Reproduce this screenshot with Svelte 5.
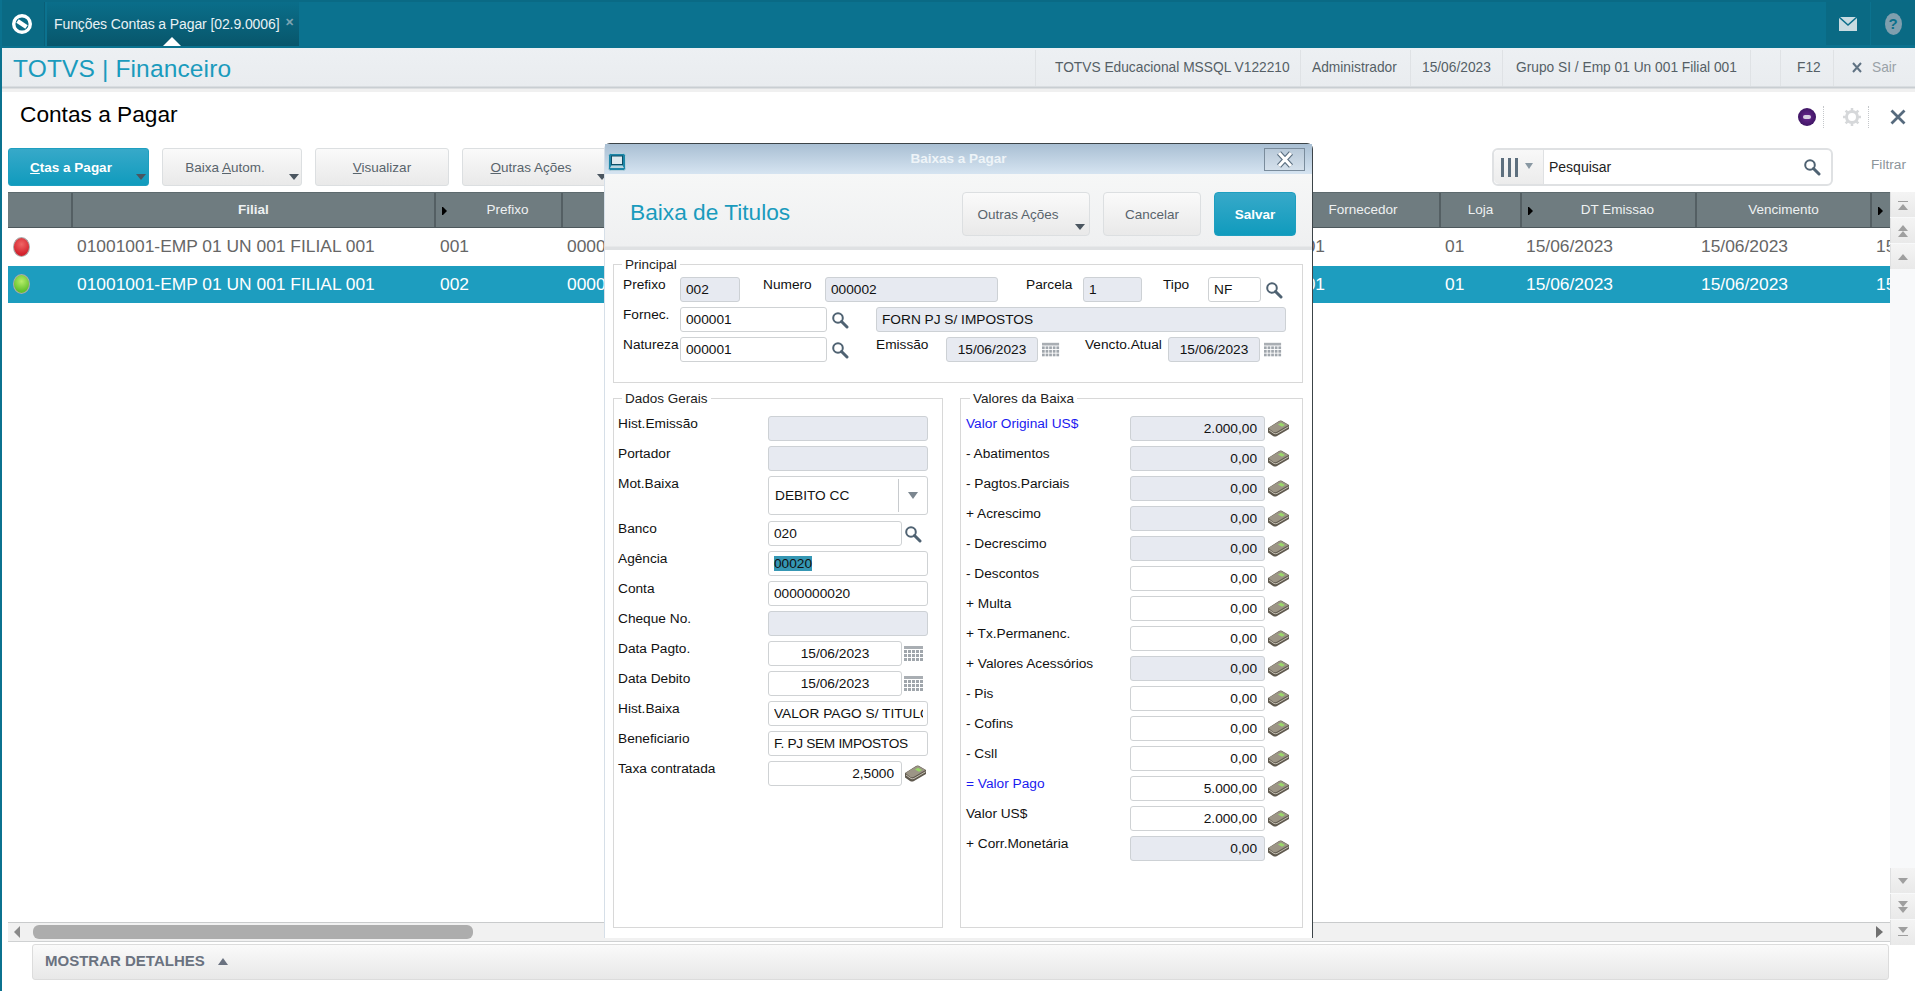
<script>
  const columns = [
    { label: '', w: 65 },
    { label: 'Filial', w: 363, bold: true },
    { label: 'Prefixo', w: 127, sort: true },
    { label: 'Numero', w: 200 },
    { label: 'Parcela', w: 100 },
    { label: 'Tipo', w: 100 },
    { label: 'Natureza', w: 324 },
    { label: 'Fornecedor', w: 154 },
    { label: 'Loja', w: 81 },
    { label: 'DT Emissao', w: 175, sort: true },
    { label: 'Vencimento', w: 175 },
    { label: '', w: 18, sort: true }
  ];
  const rows = [
    { cls: 'red', selected: false, prefix: '001', num: '000001' },
    { cls: 'green', selected: true, prefix: '002', num: '000002' }
  ];
  const geral = [
    { label: 'Hist.Emissão', ro: true },
    { label: 'Portador', ro: true },
    { label: 'Mot.Baixa', select: 'DEBITO CC' },
    { label: 'Banco', value: '020', icon: 'search' },
    { label: 'Agência', value: '00020', highlighted: true },
    { label: 'Conta', value: '0000000020' },
    { label: 'Cheque No.', ro: true },
    { label: 'Data Pagto.', value: '15/06/2023', icon: 'cal', center: true },
    { label: 'Data Debito', value: '15/06/2023', icon: 'cal', center: true },
    { label: 'Hist.Baixa', value: 'VALOR PAGO S/ TITULO', clip: true },
    { label: 'Beneficiario', value: 'F. PJ SEM IMPOSTOS', tight: true },
    { label: 'Taxa contratada', value: '2,5000', icon: 'money', right: true }
  ];
  const valores = [
    { label: 'Valor Original US$', value: '2.000,00', ro: true, blue: true },
    { label: '- Abatimentos', value: '0,00', ro: true },
    { label: '- Pagtos.Parciais', value: '0,00', ro: true },
    { label: '+ Acrescimo', value: '0,00', ro: true },
    { label: '- Decrescimo', value: '0,00', ro: true },
    { label: '- Descontos', value: '0,00' },
    { label: '+ Multa', value: '0,00' },
    { label: '+ Tx.Permanenc.', value: '0,00' },
    { label: '+ Valores Acessórios', value: '0,00', ro: true },
    { label: '- Pis', value: '0,00' },
    { label: '- Cofins', value: '0,00' },
    { label: '- Csll', value: '0,00' },
    { label: '= Valor Pago', value: '5.000,00', blue: true },
    { label: 'Valor US$', value: '2.000,00' },
    { label: '+ Corr.Monetária', value: '0,00', ro: true }
  ];
  const calCols = [0, 4, 8, 12, 16];
</script>

{#snippet searchIcon()}
  <svg class="ico-search" width="18" height="18" viewBox="0 0 18 18">
    <circle cx="7" cy="7" r="4.8" fill="#fff" stroke="#4f6272" stroke-width="2" />
    <path d="M10.5 10.5 L16 16" stroke="#4f6272" stroke-width="3" stroke-linecap="round" />
  </svg>
{/snippet}

{#snippet calIcon()}
  <svg class="ico-cal" width="20" height="16" viewBox="0 0 20 16">
    <rect x="0" y="0" width="19" height="3" fill="#a9aeb3" />
    {#each [4, 8, 12] as y}
      {#each calCols as x}
        <rect {x} {y} width="3" height="3" fill="#a0a6ac" />
      {/each}
    {/each}
  </svg>
{/snippet}

{#snippet moneyIcon()}
  <svg class="ico-money" width="23" height="17" viewBox="0 0 23 17">
    <path d="M1 8 L12 1 Q14 0 16 1.500 L22 5 L22 9 L10 16 Q8 17 6 16 L1 12.500 Z" fill="#5f594e" />
    <path d="M1.500 8 L12 1.500 Q14 .5 16 2 L21.500 5 L10 11.800 Q8 12.800 6 11.800 Z" fill="#9c9586" />
    <path d="M11 4.500 L14 2.800 L18 5 L15 6.800 Z" fill="#9ad76a" />
    <path d="M2 10 L7 13.500 Q8 14 10 13.500 L21.500 6.800" fill="none" stroke="#cfcabd" stroke-width=".9" />
  </svg>
{/snippet}

{#snippet caret()}
  <span class="caret"></span>
{/snippet}

<div class="page">
  <header class="topbar">
    <div class="logo-cell">
      <svg width="22" height="22" viewBox="0 0 22 22">
        <circle cx="11" cy="11" r="8.300" fill="none" stroke="#fff" stroke-width="3.400" />
        <path d="M6.500 8 L15.500 14" fill="none" stroke="#fff" stroke-width="4.500" />
      </svg>
    </div>
    <div class="tab">
      <span class="tab-text">Funções Contas a Pagar [02.9.0006]</span>
      <span class="tab-close">✕</span>
      <span class="tab-notch"></span>
    </div>
    <div class="top-spacer"></div>
    <div class="top-icon">
      <svg width="18" height="14" viewBox="0 0 18 14">
        <path d="M0 0 H18 V14 H0 Z" fill="#c9dbe1" />
        <path d="M0 0 L9 8 L18 0" fill="none" stroke="#0b6f8b" stroke-width="1.500" />
      </svg>
    </div>
    <div class="top-icon help">
      <span class="help-oval">?</span>
    </div>
  </header>

  <div class="appbar">
    <div class="brand">TOTVS | Financeiro</div>
    <div class="info">
      <span class="i1">TOTVS Educacional MSSQL V122210</span>
      <span class="i2">Administrador</span>
      <span class="i3">15/06/2023</span>
      <span class="i4">Grupo SI / Emp 01 Un 001 Filial 001</span>
      <span class="i5"></span>
      <span class="i6">F12</span>
      <span class="i7">
        <svg class="sair-x" width="10" height="11" viewBox="0 0 10 11">
          <path d="M1 1 L9 10 M9 1 L1 10" stroke="#5f7283" stroke-width="2" />
        </svg>Sair</span>
    </div>
  </div>

  <div class="title-row">
    <h1>Contas a Pagar</h1>
    <div class="title-tools">
      <span class="purple"><span class="purple-in"></span></span>
      <span class="dots"></span>
      <svg class="gear" width="20" height="20" viewBox="0 0 20 20">
        <circle cx="10" cy="10" r="5.500" fill="none" stroke="#d6d8da" stroke-width="3" />
        <path d="M10 1 V4 M10 16 V19 M1 10 H4 M16 10 H19 M3.600 3.600 L5.700 5.700 M14.300 14.300 L16.400 16.400 M3.600 16.400 L5.700 14.300 M14.300 5.700 L16.400 3.600" stroke="#d6d8da" stroke-width="2.500" />
      </svg>
      <span class="dots"></span>
      <svg class="big-x" width="16" height="16" viewBox="0 0 16 16">
        <path d="M1.500 1.500 L14.500 14.500 M14.500 1.500 L1.500 14.500" stroke="#566a7d" stroke-width="2.800" />
      </svg>
    </div>
  </div>

  <div class="toolbar">
    <button class="btn primary w-ctas"><span class="lbl"><u>C</u>tas a Pagar</span>{@render caret()}</button>
    <button class="btn w-baixa"><span class="lbl">Baixa <u>A</u>utom.</span>{@render caret()}</button>
    <button class="btn w-vis"><span class="lbl"><u>V</u>isualizar</span></button>
    <button class="btn w-outras"><span class="lbl"><u>O</u>utras Ações</span>{@render caret()}</button>
    <div class="tool-spacer"></div>
    <div class="searchbox">
      <div class="search-seg">
        <span class="bars"><i></i><i></i><i></i></span>
        <span class="seg-caret"></span>
      </div>
      <div class="search-text">Pesquisar</div>
      <div class="search-btn">{@render searchIcon()}</div>
    </div>
    <div class="filtrar">Filtrar</div>
  </div>

  <div class="main">
    <div class="grid">
      <div class="grid-head">
        {#each columns as c}
          <div class="th" class:bold={c.bold} class:sorted={c.sort} style="width:{c.w}px">
            {#if c.sort}<span class="sort"></span>{/if}
            {c.label}
          </div>
        {/each}
      </div>
      {#each rows as r}
        <div class="tr" class:sel={r.selected}>
          <div class="td" style="width:65px"><span class="led {r.cls}"></span></div>
          <div class="td" style="width:363px">01001001-EMP 01 UN 001 FILIAL 001</div>
          <div class="td" style="width:127px">{r.prefix}</div>
          <div class="td" style="width:700px">{r.num}</div>
          <div class="td" style="width:178px">000001</div>
          <div class="td" style="width:81px">01</div>
          <div class="td" style="width:175px">15/06/2023</div>
          <div class="td" style="width:175px">15/06/2023</div>
          <div class="td" style="width:18px">15/06/2023</div>
        </div>
      {/each}
      <div class="grid-fill"></div>
      <div class="hscroll">
        <span class="tri-left"></span>
        <span class="thumb"></span>
        <span class="h-spacer"></span>
        <span class="tri-right"></span>
      </div>
    </div>
    <div class="vscroll">
      <div class="sb top"><span class="bar"></span><span class="up"></span></div>
      <div class="sb top"><span class="up"></span><span class="up"></span></div>
      <div class="sb top"><span class="up"></span></div>
      <div class="sb-fill"></div>
      <div class="sb bot"><span class="down"></span></div>
      <div class="sb bot"><span class="down"></span><span class="down"></span></div>
      <div class="sb bot"><span class="down"></span><span class="bar"></span></div>
    </div>
  </div>

  <div class="details">MOSTRAR DETALHES <span class="det-tri"></span></div>

  <section class="modal">
    <div class="m-title">
      <svg class="m-icon" width="18" height="18" viewBox="0 0 18 18">
        <rect x=".5" y=".5" width="17" height="17" rx="2" fill="#1d86a8" stroke="#b6d0dc" />
        <rect x="3.500" y="3" width="11" height="8.500" fill="#dfe9ee" stroke="#0e4f66" />
        <path d="M3.500 12.500 H14.500 L16 15 H2 Z" fill="#bcd6e0" />
      </svg>
      <span class="m-caption">Baixas a Pagar</span>
      <button class="m-close" aria-label="Fechar">
        <svg width="22" height="19" viewBox="0 0 22 19">
          <path d="M5 3 L17 16 M17 3 L5 16" stroke="#5b6f80" stroke-width="5.500" />
          <path d="M5 3 L17 16 M17 3 L5 16" stroke="#fff" stroke-width="3.200" />
        </svg>
      </button>
    </div>
    <div class="m-head">
      <h2>Baixa de Titulos</h2>
      <div class="m-actions">
        <button class="btn mb-outras"><span class="lbl">Outras Ações</span>{@render caret()}</button>
        <button class="btn mb-cancel"><span class="lbl">Cancelar</span></button>
        <button class="btn primary mb-save"><span class="lbl">Salvar</span></button>
      </div>
    </div>
    <div class="m-body">
      <fieldset class="fs principal">
        <legend>Principal</legend>
        <div class="p-row">
          <label class="lab w57">Prefixo</label>
          <span class="inp ro w60">002</span>
          <label class="lab l23 w62">Numero</label>
          <span class="inp ro w173">000002</span>
          <label class="lab l28 w57">Parcela</label>
          <span class="inp ro w59">1</span>
          <label class="lab l21 w45">Tipo</label>
          <span class="inp w53">NF</span>
          <span class="ic-cell">{@render searchIcon()}</span>
        </div>
        <div class="p-row">
          <label class="lab w57">Fornec.</label>
          <span class="inp w147">000001</span>
          <span class="ic-cell">{@render searchIcon()}</span>
          <span class="inp ro w410 l27">FORN PJ S/ IMPOSTOS</span>
        </div>
        <div class="p-row">
          <label class="lab w57">Natureza</label>
          <span class="inp w147">000001</span>
          <span class="ic-cell">{@render searchIcon()}</span>
          <label class="lab l27 w70">Emissão</label>
          <span class="inp ro center w92">15/06/2023</span>
          <span class="ic-cell">{@render calIcon()}</span>
          <label class="lab l25 w83">Vencto.Atual</label>
          <span class="inp ro center w92">15/06/2023</span>
          <span class="ic-cell">{@render calIcon()}</span>
        </div>
      </fieldset>
      <div class="two">
        <fieldset class="fs geral">
          <legend>Dados Gerais</legend>
          {#each geral as f}
            <div class="f-row" class:tall={f.select}>
              <label class="lab f-lab">{f.label}</label>
              {#if f.select}
                <div class="select">
                  <span class="sel-val">{f.select}</span>
                  <span class="sel-btn"><span class="sel-tri"></span></span>
                </div>
              {:else}
                <span class="inp" class:ro={f.ro} class:center={f.center} class:right={f.right} class:short={f.icon} class:clip={f.clip} class:tight={f.tight}>
                  {#if f.highlighted}<mark>{f.value}</mark>{:else}{f.value ?? ''}{/if}
                </span>
                {#if f.icon === 'search'}<span class="ic-cell">{@render searchIcon()}</span>{/if}
                {#if f.icon === 'cal'}<span class="ic-cell">{@render calIcon()}</span>{/if}
                {#if f.icon === 'money'}<span class="ic-cell">{@render moneyIcon()}</span>{/if}
              {/if}
            </div>
          {/each}
        </fieldset>
        <fieldset class="fs valores">
          <legend>Valores da Baixa</legend>
          {#each valores as v}
            <div class="v-row">
              <label class="lab v-lab" class:blue={v.blue}>{v.label}</label>
              <span class="inp right v-inp" class:ro={v.ro}>{v.value}</span>
              <span class="ic-cell">{@render moneyIcon()}</span>
            </div>
          {/each}
        </fieldset>
      </div>
    </div>
  </section>
</div>

<style>
  :global(body) { margin: 0; background: #fff; }
  .page {
    position: relative;
    width: 1915px;
    height: 991px;
    overflow: hidden;
    display: flex;
    flex-direction: column;
    font-family: "Liberation Sans", Arial, sans-serif;
    font-size: 13px;
    color: #000;
    background: #fff;
    box-sizing: border-box;
    border-left: 2px solid #0b728f;
  }
  .page * { box-sizing: border-box; }

  .topbar {
    height: 48px;
    margin-left: -2px;
    background: #0b728f;
    border-top: 2px solid #0a6a85;
    display: flex;
    flex: none;
  }
  .logo-cell {
    width: 45px;
    height: 44px;
    background: #0a6a84;
    border-right: 1px solid #0a5f77;
    display: flex;
    align-items: center;
    justify-content: center;
  }
  .tab {
    position: relative;
    width: 252px;
    height: 44px;
    margin-left: 2px;
    background: linear-gradient(#0a6e8a, #08566b);
    color: #e8f1f4;
    display: flex;
    align-items: center;
    padding-left: 7px;
  }
  .tab-text { font-size: 14px; letter-spacing: -.1px; white-space: nowrap; }
  .tab-close { margin-left: 6px; color: #7da4b2; font-size: 11px; font-weight: bold; margin-top: -3px; }
  .tab-notch {
    position: absolute;
    left: 116px;
    bottom: 0;
    border-left: 9px solid transparent;
    border-right: 9px solid transparent;
    border-bottom: 9px solid #fff;
  }
  .top-spacer { flex: 1; }
  .top-icon {
    width: 44px;
    height: 43px;
    margin-left: 1px;
    background: #0a6a84;
    display: flex;
    align-items: center;
    justify-content: center;
  }
  .help-oval {
    width: 17px;
    height: 22px;
    border-radius: 50%;
    background: #7f9fae;
    color: #0b6f8b;
    font-weight: bold;
    font-size: 15px;
    line-height: 22px;
    text-align: center;
  }

  .appbar {
    height: 44px;
    flex: none;
    display: flex;
    justify-content: space-between;
    background: linear-gradient(#edf0f3 0, #e9ecef 38px, #c9ced2 39px, #c9ced2 40px, #f0f0f0 41px);
  }
  .brand {
    padding: 7px 0 0 11px;
    font-size: 24.500px;
    line-height: 27px;
    color: #1a9bbd;
    letter-spacing: .15px;
  }
  .info { display: flex; height: 40px; color: #555f66; font-size: 13.750px; white-space: nowrap; }
  .info span { border-left: 1px solid #dfe2e5; padding-left: 13px; height: 36px; margin-top: 2px; line-height: 36px; }
  .i1 { width: 265px; padding-left: 19px !important; }
  .i2 { width: 110px; padding-left: 11px !important; }
  .i3 { width: 92px; padding-left: 11px !important; }
  .i4 { width: 248px; }
  .i5 { width: 30px; }
  .i6 { width: 53px; padding-left: 16px !important; }
  .i7 { width: 82px; padding-left: 18px !important; color: #9aa2a8; }
  .sair-x { margin-right: 10px; vertical-align: -1px; }

  .title-row {
    height: 56px;
    flex: none;
    display: flex;
    justify-content: space-between;
    align-items: flex-start;
  }
  h1 {
    margin: 8px 0 0 18px;
    font-size: 22.700px;
    font-weight: normal;
    line-height: 28px;
  }
  .title-tools { display: flex; align-items: center; height: 36px; margin-top: 7px; padding-right: 9px; }
  .purple {
    width: 18px; height: 18px; border-radius: 50%;
    background: radial-gradient(circle, #6d2a92, #2c0d52);
    display: flex; align-items: center; justify-content: center;
  }
  .purple-in { width: 8px; height: 4px; border-radius: 2px; background: #d8cfe2; }
  .dots { width: 0; height: 22px; border-left: 1px dotted #c4c7ca; margin-left: 7px; }
  .gear { margin-left: 18px; margin-right: -1px; }
  .big-x { margin-left: 21px; }

  .toolbar {
    height: 38px;
    flex: none;
    display: flex;
    padding-left: 6px;
  }
  .btn {
    position: relative;
    height: 38px;
    border: 1px solid #dcdfe1;
    border-radius: 3px;
    background: linear-gradient(#fafafa, #e9e9e9);
    font: inherit;
    font-size: 13.500px;
    color: #59646c;
    padding: 0;
    display: flex;
    align-items: center;
    justify-content: center;
    margin-right: 13px;
  }
  .btn.primary {
    background: linear-gradient(#37a9c9, #109bbd);
    border-color: #1e9fc0;
    color: #fff;
    font-weight: bold;
  }
  .caret {
    position: absolute;
    right: 2px;
    bottom: 5px;
    border-left: 5px solid transparent;
    border-right: 5px solid transparent;
    border-top: 6px solid #4b5660;
  }
  .w-ctas { width: 141px; }
  .w-ctas .lbl { margin-right: 15px; }
  .w-baixa { width: 140px; }
  .w-baixa .lbl { margin-right: 14px; }
  .w-vis { width: 134px; }
  .w-outras { width: 148px; }
  .w-outras .lbl { margin-right: 10px; }
  .tool-spacer { flex: 1; }
  .searchbox {
    width: 341px;
    height: 38px;
    border: 2px solid #dfe1e3;
    border-radius: 6px;
    display: flex;
    align-items: stretch;
    margin-right: 38px;
    background: #fff;
  }
  .search-seg {
    width: 50px;
    background: linear-gradient(#f8f8f8, #ececec);
    border-right: 1px solid #dfe1e3;
    border-radius: 5px 0 0 5px;
    display: flex;
    align-items: center;
    padding-left: 7px;
    gap: 7px;
  }
  .bars { display: flex; gap: 4px; }
  .bars i { display: block; width: 3px; height: 19px; background: #5d6f7e; }
  .seg-caret {
    border-left: 4px solid transparent;
    border-right: 4px solid transparent;
    border-top: 6px solid #8998a3;
    margin-top: -2px;
  }
  .search-text { flex: 1; padding-left: 5px; line-height: 34px; font-size: 14px; color: #222; }
  .search-btn { width: 36px; padding: 8px 0 0 8px; }
  .filtrar { width: 44px; line-height: 34px; color: #8c949a; font-size: 13.700px; }

  .main { flex: none; height: 750px; margin-top: 6px; display: flex; }
  .grid {
    width: 1882px;
    margin-left: 6px;
    display: flex;
    flex-direction: column;
  }
  .grid-head {
    height: 36px;
    display: flex;
    background: #6f7c80;
    border-bottom: 1px solid #4d585c;
    border-top: 1px solid #5d6a6e;
    overflow: hidden;
  }
  .th {
    position: relative;
    flex: none;
    height: 100%;
    border-right: 2px solid #545f63;
    color: #eef1f2;
    font-size: 13.500px;
    line-height: 33px;
    text-align: center;
  }
  .th:last-child { border-right: none; }
  .th.sorted { padding-left: 18px; }
  .th.bold { font-weight: bold; }
  .sort {
    position: absolute;
    left: 6px;
    top: 14px;
    width: 1px;
    height: 8px;
    background: #000;
  }
  .sort::after {
    content: "";
    position: absolute;
    left: 1px;
    top: 0;
    border-top: 4px solid transparent;
    border-bottom: 4px solid transparent;
    border-left: 4px solid #000;
  }
  .tr {
    height: 37.500px;
    display: flex;
    align-items: center;
    font-size: 17.400px;
    color: #666;
    overflow: hidden;
    white-space: nowrap;
  }
  .tr.sel { background: #1d9dbf; color: #fff; }
  .td { flex: none; padding-left: 4px; overflow: hidden; }
  .td:first-child { padding-left: 5px; display: flex; }
  .led {
    width: 17px;
    height: 20px;
    border-radius: 50%;
    border: 1px solid #aaa;
  }
  .led.red { background: radial-gradient(circle at 50% 35%, #f06666, #d3222d 70%); }
  .led.green { background: radial-gradient(circle at 50% 35%, #b6ec68, #62c12e 70%); }
  .grid-fill { flex: 1; }
  .hscroll {
    height: 20px;
    background: #f1f1f1;
    border-top: 1px solid #c9cbcc;
    border-bottom: 1px solid #cfd1d2;
    display: flex;
    align-items: center;
  }
  .tri-left {
    margin-left: 6px;
    border-top: 6px solid transparent;
    border-bottom: 6px solid transparent;
    border-right: 6px solid #8a8a8a;
  }
  .thumb { width: 440px; height: 14px; margin-left: 13px; border-radius: 6px; background: #adadad; }
  .h-spacer { flex: 1; }
  .tri-right {
    margin-right: 7px;
    border-top: 6px solid transparent;
    border-bottom: 6px solid transparent;
    border-left: 7px solid #707070;
  }
  .vscroll {
    width: 25px;
    height: 753px;
    background: #f8f9fa;
    display: flex;
    flex-direction: column;
    gap: 1px;
  }
  .sb {
    height: 25px;
    background: linear-gradient(#f4f4f4, #e9e9e9);
    border-left: 1px solid #dfe0e1;
    display: flex;
    flex-direction: column;
    align-items: center;
    justify-content: center;
  }
  .sb-fill { flex: 1; }
  .up {
    width: 0;
    border-left: 5px solid transparent;
    border-right: 5px solid transparent;
    border-bottom: 6px solid #9f9f9f;
  }
  .down {
    width: 0;
    border-left: 5px solid transparent;
    border-right: 5px solid transparent;
    border-top: 6px solid #9f9f9f;
  }
  .bar { width: 10px; height: 1px; background: #9f9f9f; margin: 2px 0; }

  .details {
    flex: none;
    margin: 2px 0 0 30px;
    width: 1857px;
    height: 36px;
    border: 1px solid #dcdcdc;
    border-radius: 3px;
    background: linear-gradient(#fafafa, #e8e8e8);
    color: #6a7280;
    font-weight: bold;
    font-size: 15px;
    line-height: 32px;
    padding-left: 12px;
  }
  .det-tri {
    display: inline-block;
    margin-left: 9px;
    vertical-align: 1px;
    border-left: 5px solid transparent;
    border-right: 5px solid transparent;
    border-bottom: 7px solid #6a7280;
  }

  .modal {
    position: absolute;
    left: 602px;
    top: 143px;
    width: 709px;
    height: 795px;
    background: #fff;
    border-top: 1px solid #3c4448;
    border-right: 1px solid #3c4448;
    border-left: 1px solid #d6dfe8;
    border-radius: 6px 6px 0 0;
    display: flex;
    flex-direction: column;
  }
  .m-title {
    position: relative;
    height: 30px;
    flex: none;
    background: linear-gradient(#a9bfd3, #d6e4f1);
    text-align: center;
  }
  .m-icon { position: absolute; left: 3px; top: 9px; }
  .m-caption { color: #eef4f8; font-weight: bold; font-size: 13.500px; line-height: 30px; }
  .m-close {
    position: absolute;
    right: 7px;
    top: 4px;
    width: 41px;
    height: 23px;
    padding: 0;
    border: 1px solid #7a8c9c;
    background: linear-gradient(#b8c9d9, #d4e0eb);
    display: flex;
    align-items: center;
    justify-content: center;
  }
  .m-head {
    height: 76px;
    flex: none;
    background: linear-gradient(#f6f7f7, #eff0f1 72px, #dfe1e3 73px);
    display: flex;
    justify-content: space-between;
    padding: 18px 16px 0 25px;
  }
  h2 {
    margin: 0;
    font-weight: normal;
    font-size: 22.700px;
    line-height: 40px;
    color: #1a9bbd;
  }
  .m-actions { display: flex; }
  .m-actions .btn { height: 44px; margin-right: 13px; border-radius: 4px; font-size: 13.500px; }
  .m-actions .btn:last-child { margin-right: 0; }
  .mb-outras { width: 128px; }
  .mb-outras .lbl { margin-right: 16px; }
  .mb-outras .caret { right: 4px; }
  .mb-cancel { width: 98px; }
  .mb-save { width: 82px; }

  .m-body { flex: 1; padding: 7px 9px 0 8px; }
  .fs {
    margin: 0;
    padding: 0;
    border: 1px solid #d8d8d8;
    min-width: 0;
  }
  legend {
    margin-left: 4px;
    padding: 0 3px;
    font-size: 13.500px;
    line-height: 15px;
    color: #222;
  }
  .principal legend { margin-left: -1px; }
  .principal { height: 126px; padding: 5px 0 0 9px; }
  .p-row { display: flex; height: 25px; margin-bottom: 5px; align-items: flex-start; }
  .p-row .ic-cell { padding-left: 4px; width: 22px; }
  .lab { font-size: 13.700px; line-height: 15px; color: #111; white-space: nowrap; display: block; }
  .w57 { width: 57px; }
  .w62 { width: 62px; }
  .w45 { width: 45px; }
  .w70 { width: 70px; }
  .w83 { width: 83px; }
  .l23 { margin-left: 23px; }
  .l28 { margin-left: 28px; }
  .l21 { margin-left: 21px; }
  .l27 { margin-left: 27px; }
  .l25 { margin-left: 25px; }
  .w60 { width: 60px; }
  .w173 { width: 173px; }
  .w59 { width: 59px; }
  .w53 { width: 53px; }
  .w147 { width: 147px; }
  .w410 { width: 410px; }
  .w92 { width: 92px; }

  .inp {
    display: block;
    flex: none;
    height: 25px;
    border: 1px solid #cfd2d4;
    border-radius: 3px;
    background: #fff;
    font-size: 13.700px;
    line-height: 24px;
    padding: 0 5px;
    color: #111;
    overflow: hidden;
    white-space: nowrap;
  }
  .inp.ro { background: #e7eaf1; border-color: #cdd1d5; }
  .inp.center { text-align: center; }
  .inp.right { text-align: right; padding-right: 7px; }
  .inp.clip { overflow: clip; overflow-clip-margin: content-box; padding-right: 4px; }
  .inp.tight { letter-spacing: -.33px; }
  mark { background: #3597b4; color: #111; padding: 0; }
  .ic-cell { flex: none; display: flex; align-items: center; height: 25px; }

  .two { display: flex; justify-content: space-between; margin-top: 8px; }
  .geral { width: 330px; height: 537px; padding: 10px 0 0 4px; }
  .valores { width: 343px; height: 537px; padding: 10px 0 0 5px; }
  .f-row { display: flex; height: 25px; margin-bottom: 5px; }
  .f-row.tall { height: 39px; margin-bottom: 6px; }
  .f-lab { width: 150px; flex: none; }
  .f-row .inp { width: 160px; }
  .f-row .inp.short { width: 134px; }
  .f-row .ic-cell { padding-left: 2px; width: 26px; }
  .select {
    width: 160px;
    height: 39px;
    border: 1px solid #cfd2d4;
    border-radius: 3px;
    display: flex;
    align-items: center;
    font-size: 13.700px;
    color: #111;
  }
  .sel-val { flex: 1; padding-left: 6px; }
  .sel-btn {
    width: 29px;
    height: 33px;
    border-left: 1px solid #c8cbce;
    display: flex;
    align-items: center;
    justify-content: center;
  }
  .sel-tri {
    border-left: 5px solid transparent;
    border-right: 5px solid transparent;
    border-top: 7px solid #7c8790;
  }
  .v-row { display: flex; height: 25px; margin-bottom: 5px; }
  .v-lab { width: 164px; flex: none; }
  .v-lab.blue { color: #1a1af0; }
  .v-inp { width: 135px; }
  .v-row .ic-cell { padding-left: 2px; width: 26px; }
</style>
